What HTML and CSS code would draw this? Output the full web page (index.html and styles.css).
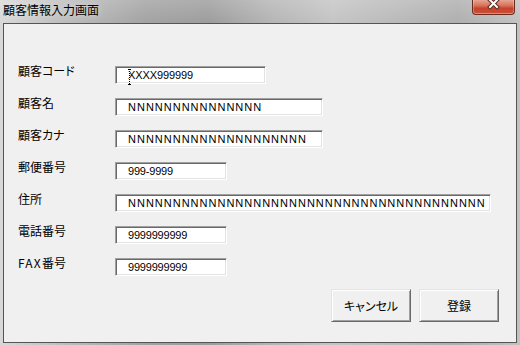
FILE: index.html
```html
<!DOCTYPE html>
<html lang="ja">
<head>
<meta charset="utf-8">
<title>顧客情報入力画面</title>
<link rel="stylesheet" href="styles.css">
</head>
<body>
<div class="window">
  <div class="titlebar">
    <span class="title">顧客情報入力画面</span>
    <button class="close" type="button" aria-label="閉じる">
      <svg width="43" height="15" viewBox="0 0 43 15">
        <path d="M18 1 L25 8 M25 1 L18 8" stroke="#5a2a20" stroke-width="4" stroke-linecap="square" fill="none"/>
        <path d="M18 1 L25 8 M25 1 L18 8" stroke="#ffffff" stroke-width="2" stroke-linecap="square" fill="none"/>
      </svg>
    </button>
  </div>
  <div class="client">
    <div class="form">
      <label class="lbl">顧客コード</label>
      <div class="field"><input class="tb w-code t-code" value="XXXX999999" readonly><span class="ibeam"></span></div>

      <label class="lbl">顧客名</label>
      <div class="field"><input class="tb w-name t-n" value="NNNNNNNNNNNNNNN" readonly></div>

      <label class="lbl">顧客カナ</label>
      <div class="field"><input class="tb w-name t-n" value="NNNNNNNNNNNNNNNNNNNN" readonly></div>

      <label class="lbl">郵便番号</label>
      <div class="field"><input class="tb w-short t-num" value="999-9999" readonly></div>

      <label class="lbl">住所</label>
      <div class="field"><input class="tb w-addr t-n" value="NNNNNNNNNNNNNNNNNNNNNNNNNNNNNNNNNNNNNNNN" readonly></div>

      <label class="lbl">電話番号</label>
      <div class="field"><input class="tb w-short t-num" value="9999999999" readonly></div>

      <label class="lbl"><span class="latin">FAX</span>番号</label>
      <div class="field"><input class="tb w-short t-num" value="9999999999" readonly></div>
    </div>
    <div class="actions">
      <button class="btn" type="button">キャンセル</button>
      <button class="btn" type="button">登録</button>
    </div>
  </div>
</div>
</body>
</html>
```

FILE: styles.css
```css
html, body {
  margin: 0;
  padding: 0;
}
body {
  width: 520px;
  height: 345px;
  overflow: hidden;
  background: #c8c8c8;
}
.window {
  width: 520px;
  height: 345px;
  box-sizing: border-box;
  padding: 0 3px 2px 3px;
  display: flex;
  flex-direction: column;
  background:
    linear-gradient(to bottom, rgba(255,255,255,0.18), rgba(255,255,255,0) 24px),
    linear-gradient(to right, #d8d8d8 0%, #bdbdbd 12%, #a2a2a2 28%, #9c9c9c 40%, #b4b4b4 52%, #c4c4c4 64%, #b9b9b9 76%, #aeaeae 88%, #c2c2c2 100%);
}
.titlebar {
  height: 23px;
  display: flex;
  align-items: flex-start;
  margin: 0 -3px;
}
.title {
  font-family: "Noto Sans CJK JP", sans-serif;
  font-size: 12px;
  line-height: 17px;
  color: #000;
  margin: 1px 0 0 3px;
  text-shadow: 0 0 6px rgba(255,255,255,0.6);
}
.close {
  margin-left: auto;
  margin-right: 5px;
  width: 43px;
  height: 15px;
  padding: 0;
  border: 1px solid #6b2b1e;
  border-top: 0;
  border-radius: 0 0 4px 4px;
  background: linear-gradient(to bottom, #e6a592 0%, #d8715a 40%, #c5432b 60%, #c9513a 100%);
  box-shadow: inset 0 -1px 0 rgba(255,255,255,0.35), inset 1px 0 0 rgba(255,255,255,0.25), inset -1px 0 0 rgba(255,255,255,0.25);
  display: block;
  box-sizing: border-box;
}
.close svg {
  display: block;
  margin: -1px 0 0 -1px;
}
.client {
  flex: 1;
  background: #f0f0f0;
  border: 1px solid #555;
  padding: 42px 17px 0 14px;
  box-sizing: border-box;
}
.form {
  display: grid;
  grid-template-columns: 97px auto;
  row-gap: 14px;
  align-items: start;
}
.lbl {
  font-family: "Noto Sans CJK JP", sans-serif;
  font-feature-settings: "palt";
  font-size: 12px;
  line-height: 17px;
  color: #000;
  margin-top: -4px;
}
.latin {
  letter-spacing: 1.2px;
}
.field {
  position: relative;
  height: 18px;
}
.tb {
  display: block;
  box-sizing: border-box;
  height: 18px;
  margin: 0;
  padding: 0 0 0 12px;
  border: 1px solid;
  border-color: #a0a0a0 #ffffff #ffffff #a0a0a0;
  box-shadow: inset 1px 1px 0 #696969, inset -1px -1px 0 #e3e3e3;
  background: #fff;
  font-family: "Liberation Sans", Arial, sans-serif;
  font-size: 11px;
  color: #000;
  outline: none;
}
.w-code { width: 151px; }
.w-name { width: 208px; }
.w-short { width: 112px; }
.w-addr { width: 376px; }
.t-n { letter-spacing: 1px; }
.t-num { letter-spacing: -0.2px; }
.t-code { letter-spacing: -0.1px; }
.ibeam {
  position: absolute;
  left: 14px;
  top: 3px;
  width: 1px;
  height: 16px;
  background: repeating-linear-gradient(to bottom, #000 0 1px, #fff 1px 2px);
}
.ibeam::before,
.ibeam::after {
  content: "";
  position: absolute;
  left: -1px;
  width: 3px;
  height: 1px;
  background: #000;
}
.ibeam::before { top: 0; }
.ibeam::after { bottom: 0; }
.actions {
  display: flex;
  justify-content: flex-end;
  gap: 8px;
  margin-top: 13px;
}
.btn {
  width: 80px;
  height: 33px;
  box-sizing: border-box;
  margin: 0;
  padding: 0;
  border: 1px solid;
  border-color: #e3e3e3 #696969 #696969 #e3e3e3;
  box-shadow: inset 1px 1px 0 #ffffff, inset -1px -1px 0 #a0a0a0;
  background: #f0f0f0;
  font-family: "Noto Sans CJK JP", sans-serif;
  font-feature-settings: "palt";
  font-size: 12px;
  color: #000;
}
```
